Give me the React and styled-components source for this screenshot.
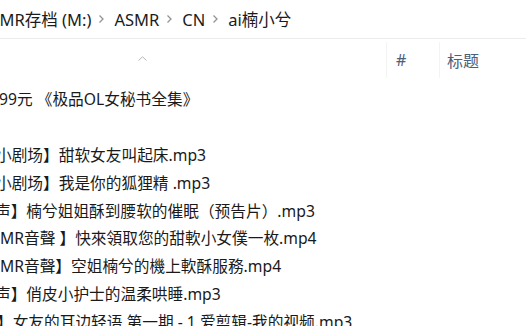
import styled, { createGlobalStyle } from 'styled-components';

const crumbs = ['ASMR存档 (M:)', 'ASMR', 'CN', 'ai楠小兮'];

const files = [
    { name: '99元 《极品OL女秘书全集》', cut: 1 },
    { name: '', cut: 0 },
    { name: '小剧场】甜软女友叫起床.mp3', cut: 4 },
    { name: '小剧场】我是你的狐狸精 .mp3', cut: 4 },
    { name: '声】楠兮姐姐酥到腰软的催眠（预告片）.mp3', cut: 5 },
    { name: 'MR音聲 】快來領取您的甜軟小女僕一枚.mp4', cut: 0 },
    { name: 'MR音聲】空姐楠兮的機上軟酥服務.mp4', cut: 0 },
    { name: '声】俏皮小护士的温柔哄睡.mp3', cut: 5 },
    { name: '】女友的耳边轻语 第一期 - 1 爱剪辑-我的视频.mp3', cut: 3 },
];

const Chevron = () => (
    <svg width="9" height="10" viewBox="0 0 9 10" fill="none">
        <polyline points="2.5,1.5 6,5 2.5,8.5" stroke="#939393" strokeWidth="1.3" />
    </svg>
);

const App = () => {
    return (
        <>
            <GlobalStyle />
            <Frame>
                <Breadcrumb>
                    {crumbs.map((c, i) => (
                        <Crumb key={c} first={i === 0}>
                            {i > 0 && <Chevron />}
                            <span>{c}</span>
                        </Crumb>
                    ))}
                </Breadcrumb>
                <Header>
                    <NameHead>
                        <SortCaret>
                            <svg width="9" height="5" viewBox="0 0 9 5" fill="none">
                                <polyline points="0.5,4.5 4.5,0.8 8.5,4.5" stroke="#b4b4b4" strokeWidth="1" />
                            </svg>
                        </SortCaret>
                    </NameHead>
                    <ColHead width="53px" pad={9}>#</ColHead>
                    <ColHead pad={7}>标题</ColHead>
                </Header>
                <FileList>
                    {files.map((f, i) => (
                        <FileRow key={i}>
                            <FileName cut={f.cut}>{f.name}</FileName>
                        </FileRow>
                    ))}
                </FileList>
            </Frame>
        </>
    )
}

export default App;


// ---styles---

const GlobalStyle = createGlobalStyle`
    body {
        margin: 0;
        background: #ffffff;
        font-family: "Noto Sans", "Noto Sans CJK SC", sans-serif;
    }
`

const Frame = styled.div`
    width: 526px;
    height: 326px;
    overflow: hidden;
    background: #ffffff;
`

const Breadcrumb = styled.div`
    height: 38px;
    display: flex;
    align-items: center;
    border-bottom: 1px solid #ececec;
    margin-left: -20px;
    font-size: 16.5px;
    color: #1b1b1b;
    white-space: nowrap;
`

const Crumb = styled.div`
    display: flex;
    align-items: center;
    gap: 8px;
    margin-left: ${p => (p.first ? 0 : 6)}px;
`

const Header = styled.div`
    height: 41px;
    display: flex;
    align-items: stretch;
`

const NameHead = styled.div`
    width: 488px;
    margin-left: -102px;
    flex-shrink: 0;
    display: flex;
    justify-content: center;
`

const SortCaret = styled.div`
    padding-top: 5px;
    height: 8px;
`

const ColHead = styled.div`
    width: ${p => p.width || 'auto'};
    flex: ${p => (p.width ? '0 0 auto' : '1')};
    display: flex;
    align-items: center;
    padding-left: ${p => p.pad}px;
    margin: 3px 0 2px;
    border-left: 1px solid #f3f3f3;
    font-size: 16px;
    color: #4c607a;
    box-sizing: border-box;
`

const FileList = styled.div`
    padding-top: 5px;
`

const FileRow = styled.div`
    height: 27.8px;
    display: flex;
    align-items: center;
    white-space: nowrap;
`

const FileName = styled.span`
    margin-left: ${p => -p.cut}px;
    font-size: 15.7px;
    color: #1a1a1a;
`
